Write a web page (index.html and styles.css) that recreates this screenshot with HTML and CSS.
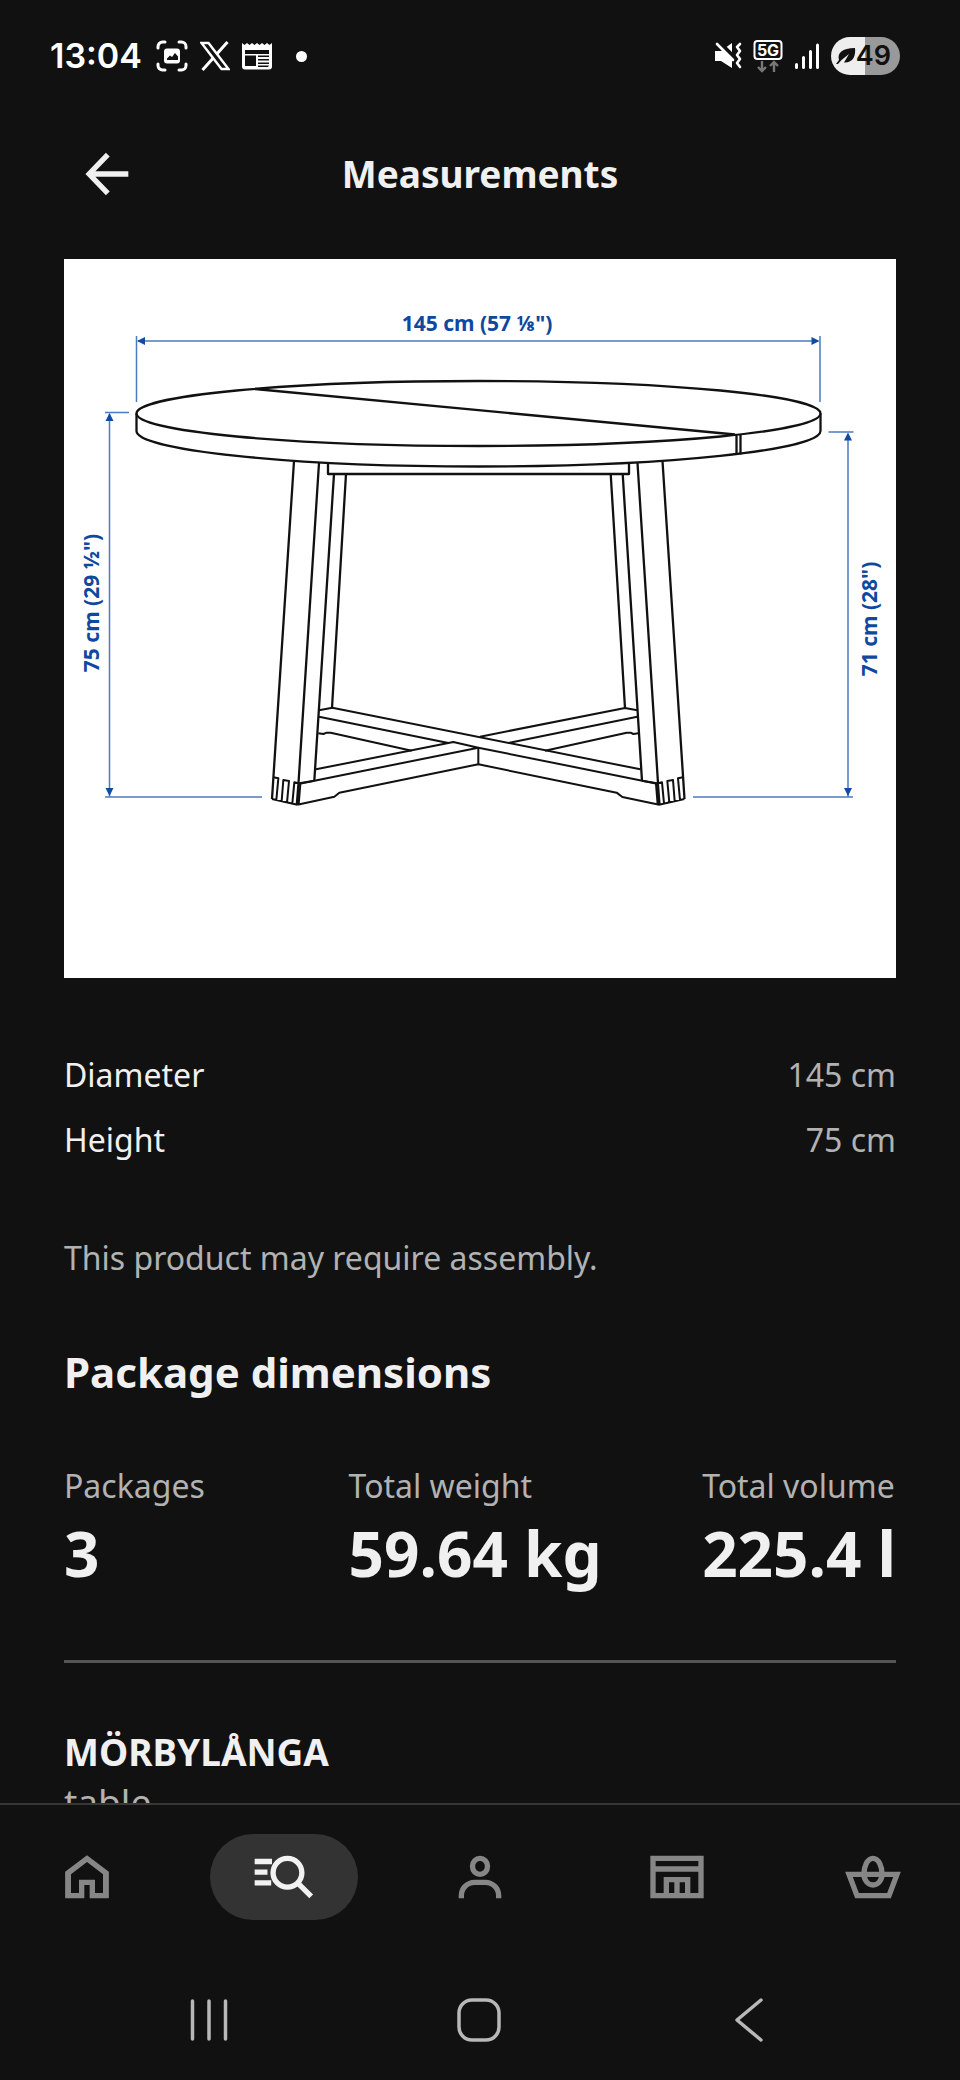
FILE: index.html
```html
<!DOCTYPE html>
<html lang="en">
<head>
<meta charset="utf-8">
<meta name="viewport" content="width=device-width, initial-scale=1">
<title>Measurements</title>
<link rel="stylesheet" href="styles.css">
</head>
<body>
<div class="app">
  <div class="status">
    <div class="status-left">
      <span class="clock">13:04</span>
      <svg class="ic" width="32" height="32" viewBox="0 0 32 32" fill="none" stroke="#fff" stroke-width="3" stroke-linecap="round" aria-hidden="true">
        <path d="M2 8V6.500a4.500 4.500 0 0 1 4.500-4.500H9M23 2h2.500A4.500 4.500 0 0 1 30 6.500V8M30 24v1.500a4.500 4.500 0 0 1-4.500 4.500H23M9 30H6.500A4.500 4.500 0 0 1 2 25.500V24"/>
        <rect x="8" y="8.500" width="16" height="15" rx="3" fill="#fff" stroke="none"/>
        <path d="M11 20v-1.500l3-3 2 1.500 3-4 3 3.500V20z" fill="#111" stroke="none"/>
      </svg>
      <svg class="ic" width="30" height="30" viewBox="0 0 30 30" aria-hidden="true">
        <path d="M27.500 1L2.500 29" stroke="#fff" stroke-width="3"/>
        <path d="M1.500 2h7l20 26h-7z" fill="#111" stroke="#fff" stroke-width="2.400"/>
      </svg>
      <svg class="ic" width="30" height="28" viewBox="0 0 30 28" aria-hidden="true">
        <path fill="#fff" fill-rule="evenodd" d="M0 1l2.500 2L5 1l2.500 2L10 1l2.500 2L15 1l2.500 2L20 1l2.500 2L25 1l2.500 2L30 1V24.500a3 3 0 0 1-3 3H3a3 3 0 0 1-3-3zM3 8v4h24V8zM3 13.500V24h11V13.500zM16 13.500v1.500h11v-1.500zM16 17v1.500h11V17zM16 20.500V22h11v-1.500zM16 23.500V25h10l1-1.500z"/>
      </svg>
      <span class="dot"></span>
    </div>
    <div class="status-right">
      <svg class="ic" width="28" height="28" viewBox="0 0 28 28" aria-hidden="true">
        <path d="M1 9h6L18 1v25L7 19H1z" fill="#fff"/>
        <path d="M4 -1L21 16" stroke="#111" stroke-width="4"/>
        <path d="M3 2L19 18" stroke="#fff" stroke-width="2.600" stroke-linecap="round"/>
        <path d="M26 2l-3 3 3 4-3 4 3 4-3 4 3 4" fill="none" stroke="#fff" stroke-width="2.600" stroke-linejoin="round" stroke-linecap="round"/>
      </svg>
      <svg class="ic" width="30" height="34" viewBox="0 0 30 34" aria-hidden="true">
        <rect x="1.500" y="2" width="27" height="18" rx="3" fill="none" stroke="#fff" stroke-width="2"/>
        <text class="net" x="15" y="17" text-anchor="middle">5G</text>
        <path d="M9 22v10M5 28l4 4 4-4M21 33V23M17 27l4-4 4 4" fill="none" stroke="#777" stroke-width="2.400"/>
      </svg>
      <svg class="ic" width="26" height="28" viewBox="0 0 26 28" stroke="#fff" stroke-width="3" stroke-linecap="round" aria-hidden="true">
        <path d="M2.500 22.500v3M9.500 15.500v10M16.500 9.500v16M23.500 3v22.500"/>
      </svg>
      <span class="battery">
        <svg class="ic" width="20" height="18" viewBox="0 0 20 18" aria-hidden="true">
          <path d="M3 13C1 6 6 1 19 1c1 8-2 15-11 14.500L13 7 5.500 13 2 17H0z" fill="#111"/>
        </svg>49</span>
    </div>
  </div>

  <header class="header">
    <button class="back" type="button" aria-label="Back">
      <svg width="64" height="64" viewBox="0 0 24 24" fill="none" stroke="#f0f0f0" stroke-width="2"><path d="M12.300 4.700L5.300 12l7 7.300M5.300 12H20"/></svg>
    </button>
    <h1 class="title">Measurements</h1>
  </header>

  <main class="content">
    <svg class="drawing" viewBox="64 259 832 719" role="img" aria-label="Round table with dimensions">
      <rect x="64" y="259" width="832" height="719" fill="#fff"/>
      <g class="guide">
        <path d="M136.500 336v66M820 336v66M138 341h680M105 412.500h24M109.500 414v383M105 797h157M828.500 432h25M848 434v363M693 797h160"/>
      </g>
      <g class="arrow">
        <path d="M137 341l8-4v8zM819.500 341l-8-4v8zM109.500 413l-4 8h8zM109.500 796l-4-8h8zM848 432.500l-4 8h8zM848 796l-4-8h8z"/>
      </g>
      <g class="dims">
        <text x="477" y="331">145 cm (57 ⅛")</text>
        <text transform="translate(99 603) rotate(-90)">75 cm (29 ½")</text>
        <text transform="translate(877 619) rotate(-90)">71 cm (28")</text>
      </g>
      <g class="ink">
        <ellipse cx="478.500" cy="413.500" rx="342" ry="32.500"/>
        <path d="M136.500 413.500V431C136.500 450 290 466.500 478.500 466.500S820.500 450 820.500 431V413.500"/>
        <path d="M255 389L735 434.500M736.500 434.500v20.500M740.500 434v20.500"/>
        <path d="M294 461L272 799M319 463L298.500 783M334 474L314.300 781M346 474L332 708"/>
        <path d="M662.500 461L684.500 799M637.500 463L658 783M610.700 474L625 708M622.700 474L642 781"/>
        <path d="M328 463.500V474H629V463.500"/>
      </g>
      <g class="ink ink-fine" transform="translate(240 670) scale(.33333)">
        <path d="M237 121L277 113 1201 298M237 140L625 219M715 233L1255 342M235 190L250 192 260 188H272L515 242"/>
        <path d="M228 298L640 216 715 233V283M175 342L715 233M720 200L1155 114 1192 121M805 219L1192 140M915 242L1160 188H1172L1180 192 1195 190"/>
        <path d="M172 404L283 380 298 368 715 283 1130 368 1147 381 1258 404"/>
        <path id="foot" d="M96 387L172 404M178 340L223 332M100 322L115 325 109 390M125 393L130 330 147 333 141 398M157 400L163 337 175 340 170 404M181 342L176 403"/>
        <use href="#foot" transform="translate(1429 0) scale(-1 1)"/>
      </g>
    </svg>

    <dl class="specs">
      <div class="spec"><dt>Diameter</dt><dd>145 cm</dd></div>
      <div class="spec"><dt>Height</dt><dd>75 cm</dd></div>
    </dl>
    <p class="note">This product may require assembly.</p>

    <h2 class="section">Package dimensions</h2>
    <dl class="stats">
      <div><dt>Packages</dt><dd>3</dd></div>
      <div><dt>Total weight</dt><dd>59.64 kg</dd></div>
      <div><dt>Total volume</dt><dd>225.4 l</dd></div>
    </dl>
    <hr class="rule">
    <h3 class="product">MÖRBYLÅNGA</h3>
    <p class="kind">table</p>
  </main>

  <nav class="tabs" aria-label="Main">
    <a class="tab" href="#home" aria-label="Home"><svg width="64" height="64" viewBox="0 0 24 24"><path fill="currentColor" fill-rule="evenodd" d="M12 3.800L20.200 10V20H13V15H11V20H3.800V10ZM12 6.400L6 11V18H9V13H15V18H18V11Z"/></svg></a>
    <a class="tab tab-on" href="#search" aria-label="Search" aria-current="page"><svg width="64" height="64" viewBox="0 0 24 24" fill="none" stroke="currentColor" stroke-width="2"><path d="M1 6.200H7.500M1 10.200H5.800M1 14.200H7.200M17.200 14.300L22.200 19.300"/><circle cx="13.300" cy="10.400" r="5.400"/></svg></a>
    <a class="tab" href="#profile" aria-label="Profile"><svg width="64" height="64" viewBox="0 0 24 24" fill="none" stroke="currentColor" stroke-width="2"><rect x="9.200" y="5" width="5.600" height="6" rx="2.800"/><path d="M5 20V19a5 5 0 0 1 5-5h4a5 5 0 0 1 5 5v1"/></svg></a>
    <a class="tab" href="#store" aria-label="Store"><svg width="64" height="64" viewBox="0 0 24 24"><path fill="currentColor" fill-rule="evenodd" d="M2 4H22V20H2ZM4 6V8H20V6ZM4 10V18H7V12H17V18H20V10ZM9 14V18H11V14ZM13 14V18H15V14Z"/></svg></a>
    <a class="tab" href="#basket" aria-label="Shopping bag"><svg width="64" height="64" viewBox="0 0 24 24" fill="none" stroke="currentColor" stroke-width="2"><path d="M3 11H21L18 19H6Z"/><path d="M12 5c-2.200 0-3.400 3.200-3.400 6a3.400 4 0 0 0 6.800 0c0-2.800-1.200-6-3.400-6Z"/></svg></a>
  </nav>

  <div class="sysnav">
    <button type="button" aria-label="Recent apps"><svg width="48" height="48" viewBox="0 0 48 48"><path d="M7.500 5v38M24 5v38M40.500 5v38"/></svg></button>
    <button type="button" aria-label="Home screen"><svg width="48" height="48" viewBox="0 0 48 48"><rect x="4" y="4" width="40" height="40" rx="13"/></svg></button>
    <button type="button" aria-label="System back"><svg width="48" height="48" viewBox="0 0 48 48"><path d="M36 4L12 24 36 44"/></svg></button>
  </div>
</div>
</body>
</html>
```
FILE: styles.css
```css
* { box-sizing: border-box; margin: 0; }

body {
  background: #111;
  color: #f0f0f0;
  font-family: "Noto Sans", "Open Sans", sans-serif;
  font-size: 32px;
  line-height: 48px;
}

button { padding: 0; border: 0; background: none; }
svg { display: block; }

.app {
  display: flex;
  flex-direction: column;
  height: 100vh;
}

.status {
  flex: none;
  display: flex;
  align-items: center;
  justify-content: space-between;
  height: 112px;
  padding: 0 60px 0 50px;
  font-family: Inter, sans-serif;
}
.status-left, .status-right { display: flex; align-items: center; gap: 12px; }
.ic { flex: none; }
.clock { margin-right: 2px; color: #fff; font-size: 34px; font-weight: 600; }
.dot { width: 11px; height: 11px; margin-left: 12px; border-radius: 50%; background: #fff; }
.net { fill: #fff; font-size: 16px; font-weight: 700; }
.status-right { gap: 11px; }
.battery {
  display: flex;
  align-items: center;
  height: 38px;
  padding: 0 9px 0 5px;
  border-radius: 19px;
  background: linear-gradient(90deg, #eee 49%, #999 49%);
  color: #111;
  font-size: 27px;
  font-weight: 600;
}

.header {
  flex: none;
  display: grid;
  grid-template-columns: 64px 1fr 64px;
  align-items: center;
  height: 124px;
  padding: 0 75px;
}
.title { font-size: 37px; font-weight: 700; text-align: center; }

.content {
  flex: 1;
  min-height: 0;
  padding: 23px 64px 0;
  overflow: hidden;
}

.drawing { width: 100%; }
.guide { fill: none; stroke: #4a7cc0; stroke-width: 1.5; }
.arrow { fill: #0f4aa3; }
.dims { fill: #0f489f; font-size: 21px; font-weight: 700; text-anchor: middle; }
.ink { fill: none; stroke: #111; stroke-width: 2.3; stroke-linejoin: round; }
.ink-fine { stroke-width: 6; }

.specs { margin-top: 64px; }
.spec { display: flex; justify-content: space-between; line-height: 65px; }
.spec dd, .note, .stats dt, .kind { color: #b2b2b2; }
.note { margin-top: 62px; }

.section { margin-top: 58px; font-size: 42px; line-height: 64px; }
.stats {
  display: grid;
  grid-template-columns: 285fr 354fr auto;
  margin-top: 58px;
}
.stats dd { font-size: 62px; font-weight: 700; line-height: 86px; }
.rule { height: 3px; margin: 64px 0; border: 0; background: #555; }
.product { font-size: 37px; line-height: 50px; }
.kind { font-size: 37px; line-height: 50px; }

.tabs {
  flex: none;
  display: flex;
  justify-content: space-between;
  padding: 29px 13px 40px;
  border-top: 2px solid #383838;
}
.tab {
  display: grid;
  place-items: center;
  width: 148px;
  height: 86px;
  border-radius: 43px;
  color: #868686;
}
.tab-on { background: #333; color: #f2f2f2; }

.sysnav {
  flex: none;
  display: grid;
  grid-template-columns: repeat(3, 1fr);
  height: 120px;
  padding: 0 76px 0 74px;
}
.sysnav button { display: grid; place-items: center; }
.sysnav svg {
  fill: none;
  stroke: #b8b8b8;
  stroke-width: 3.5;
  stroke-linecap: round;
  stroke-linejoin: round;
}
```
